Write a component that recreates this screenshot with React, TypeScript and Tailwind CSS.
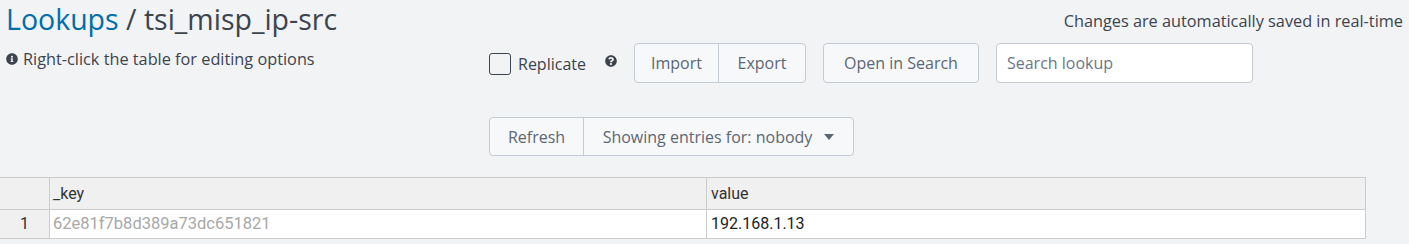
import React from "react";
import { FaInfoCircle, FaQuestionCircle } from "react-icons/fa";

export default function App() {
  const font = { fontFamily: '"Open Sans", "Liberation Sans", sans-serif' };
  return (
    <div className="w-[1409px] h-[244px] bg-[#f2f3f5] text-[#3c444d] overflow-hidden" style={font}>
      <div className="flex justify-between items-start">
        <h1 className="pl-[6px] pt-0 text-[28.5px] leading-[38px] font-normal">
          <span className="text-[#006eaa]">Lookups</span> / tsi_misp_ip-src
        </h1>
        <div className="pr-[6px] pt-[10px] text-[16.3px] leading-[22px]">Changes are automatically saved in real-time</div>
      </div>
      <div className="flex items-start mt-[3px]">
        <div className="w-[489px] pl-[6px] pt-[7px] flex items-center gap-[5px] text-[16.3px] leading-[22px]">
          <FaInfoCircle className="w-[12px] h-[12px] text-[#3c444d]" />
          <span>Right-click the table for editing options</span>
        </div>
        <div className="flex items-center mt-[2px]">
          <div className="flex items-center h-[40px]">
            <span className="w-[22px] h-[22px] border border-[#3c444d] rounded-[3px] mt-[2px]" />
            <span className="ml-[7px] text-[16px] mt-[2px]">Replicate</span>
            <FaQuestionCircle className="ml-[19px] w-[12px] h-[12px] mb-[4px]" />
          </div>
          <div className="ml-[17px] flex h-[40px] border border-[#c3cbd4] rounded-[4px] bg-[#f7f8fa] text-[#5c6773] text-[16px]">
            <div className="w-[84px] flex items-center justify-center border-r border-[#c3cbd4]">Import</div>
            <div className="w-[86px] flex items-center justify-center">Export</div>
          </div>
          <div className="ml-[17px] w-[156px] h-[40px] flex items-center justify-center border border-[#c3cbd4] rounded-[4px] bg-[#f7f8fa] text-[#5c6773] text-[16px]">
            Open in Search
          </div>
          <div className="ml-[17px] w-[257px] h-[40px] flex items-center px-[10px] border border-[#c3cbd4] rounded-[4px] bg-white text-[#6b7785] text-[16px]">
            Search lookup
          </div>
        </div>
      </div>
      <div className="pl-[489px] mt-[34px]">
        <div className="inline-flex h-[39px] border border-[#c3cbd4] rounded-[4px] bg-[#f7f8fa] text-[#5c6773] text-[16px]">
          <div className="w-[94px] flex items-center justify-center border-r border-[#c3cbd4]">Refresh</div>
          <div className="w-[269px] flex items-center justify-center gap-[8px]">
            <span>Showing entries for: nobody</span>
            <svg width="10" height="6" viewBox="0 0 10 6" className="ml-[4px]">
              <path d="M0 0h10L5 6z" fill="#5c6773" />
            </svg>
          </div>
        </div>
      </div>
      <div className="mt-[21px] w-[1366px] border-t border-r border-b border-[#cccccc] text-[16px]" style={{ fontFamily: '"Roboto", "Liberation Sans", sans-serif' }}>
        <div className="flex h-[32px] bg-[#f0f0f0] border-b border-[#cccccc]">
          <div className="w-[50px] border-r border-[#cccccc]" />
          <div className="w-[657px] border-r border-[#cccccc] px-[3px] flex items-center text-[#333]">_key</div>
          <div className="flex-1 px-[4px] flex items-center text-[#333]">value</div>
        </div>
        <div className="flex h-[28px]">
          <div className="w-[50px] bg-[#f0f0f0] border-r border-[#cccccc] flex items-center justify-center text-[#333]">1</div>
          <div className="w-[657px] bg-white border-r border-[#cccccc] px-[3px] flex items-center text-[#a8a8a8] text-[16.5px]">62e81f7b8d389a73dc651821</div>
          <div className="flex-1 bg-white px-[4px] flex items-center text-[#222]">192.168.1.13</div>
        </div>
      </div>
    </div>
  );
}
